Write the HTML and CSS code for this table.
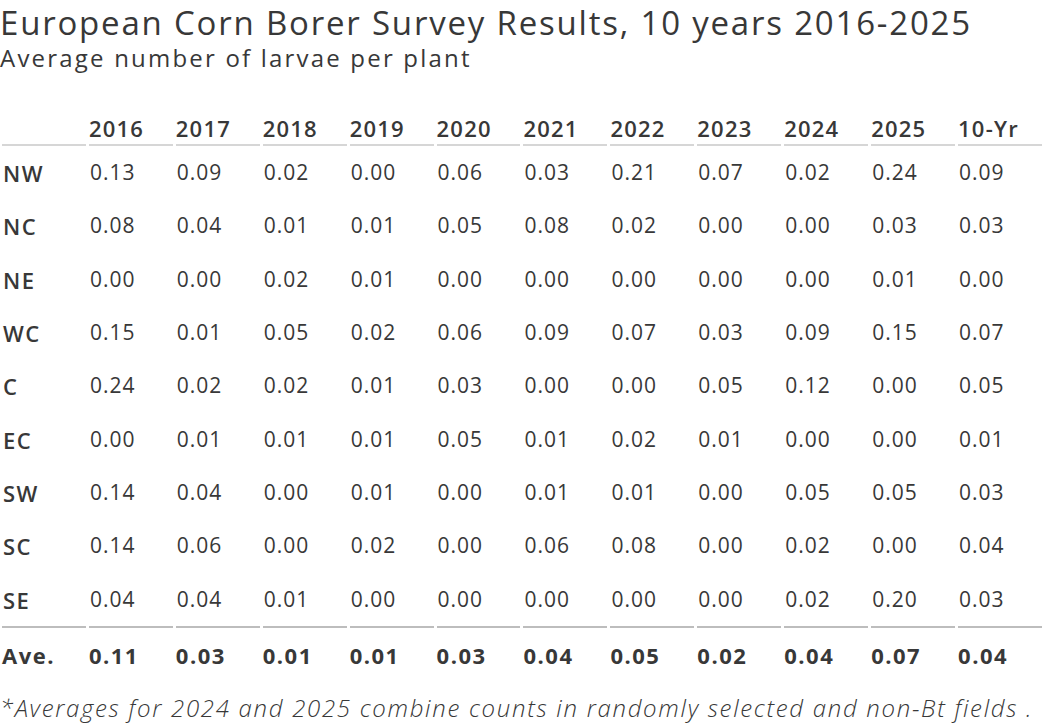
FILE: index.html
```html
<!DOCTYPE html>
<html lang="en">
<head>
<meta charset="utf-8">
<title>European Corn Borer Survey Results</title>
<link rel="stylesheet" href="styles.css">
</head>
<body>
<h1 class="title">European Corn Borer Survey Results, 10 years 2016-2025</h1>
<p class="subtitle">Average number of larvae per plant</p>
<div class="table">
  <div class="th"></div><div class="th">2016</div><div class="th">2017</div><div class="th">2018</div><div class="th">2019</div><div class="th">2020</div><div class="th">2021</div><div class="th">2022</div><div class="th">2023</div><div class="th">2024</div><div class="th">2025</div><div class="th">10-Yr</div>

  <div class="rl">NW</div><div class="td">0.13</div><div class="td">0.09</div><div class="td">0.02</div><div class="td">0.00</div><div class="td">0.06</div><div class="td">0.03</div><div class="td">0.21</div><div class="td">0.07</div><div class="td">0.02</div><div class="td">0.24</div><div class="td">0.09</div>

  <div class="rl">NC</div><div class="td">0.08</div><div class="td">0.04</div><div class="td">0.01</div><div class="td">0.01</div><div class="td">0.05</div><div class="td">0.08</div><div class="td">0.02</div><div class="td">0.00</div><div class="td">0.00</div><div class="td">0.03</div><div class="td">0.03</div>

  <div class="rl">NE</div><div class="td">0.00</div><div class="td">0.00</div><div class="td">0.02</div><div class="td">0.01</div><div class="td">0.00</div><div class="td">0.00</div><div class="td">0.00</div><div class="td">0.00</div><div class="td">0.00</div><div class="td">0.01</div><div class="td">0.00</div>

  <div class="rl">WC</div><div class="td">0.15</div><div class="td">0.01</div><div class="td">0.05</div><div class="td">0.02</div><div class="td">0.06</div><div class="td">0.09</div><div class="td">0.07</div><div class="td">0.03</div><div class="td">0.09</div><div class="td">0.15</div><div class="td">0.07</div>

  <div class="rl">C</div><div class="td">0.24</div><div class="td">0.02</div><div class="td">0.02</div><div class="td">0.01</div><div class="td">0.03</div><div class="td">0.00</div><div class="td">0.00</div><div class="td">0.05</div><div class="td">0.12</div><div class="td">0.00</div><div class="td">0.05</div>

  <div class="rl">EC</div><div class="td">0.00</div><div class="td">0.01</div><div class="td">0.01</div><div class="td">0.01</div><div class="td">0.05</div><div class="td">0.01</div><div class="td">0.02</div><div class="td">0.01</div><div class="td">0.00</div><div class="td">0.00</div><div class="td">0.01</div>

  <div class="rl">SW</div><div class="td">0.14</div><div class="td">0.04</div><div class="td">0.00</div><div class="td">0.01</div><div class="td">0.00</div><div class="td">0.01</div><div class="td">0.01</div><div class="td">0.00</div><div class="td">0.05</div><div class="td">0.05</div><div class="td">0.03</div>

  <div class="rl">SC</div><div class="td">0.14</div><div class="td">0.06</div><div class="td">0.00</div><div class="td">0.02</div><div class="td">0.00</div><div class="td">0.06</div><div class="td">0.08</div><div class="td">0.00</div><div class="td">0.02</div><div class="td">0.00</div><div class="td">0.04</div>

  <div class="rl">SE</div><div class="td">0.04</div><div class="td">0.04</div><div class="td">0.01</div><div class="td">0.00</div><div class="td">0.00</div><div class="td">0.00</div><div class="td">0.00</div><div class="td">0.00</div><div class="td">0.02</div><div class="td">0.20</div><div class="td">0.03</div>

  <div class="ave">Ave.</div><div class="ave">0.11</div><div class="ave">0.03</div><div class="ave">0.01</div><div class="ave">0.01</div><div class="ave">0.03</div><div class="ave">0.04</div><div class="ave">0.05</div><div class="ave">0.02</div><div class="ave">0.04</div><div class="ave">0.07</div><div class="ave">0.04</div>
</div>
<p class="note">*Averages for 2024 and 2025 combine counts in randomly selected and non-Bt fields .</p>
</body>
</html>
```

FILE: styles.css
```css
html, body {
  margin: 0;
  padding: 0;
  background: #ffffff;
}

body {
  font-family: "Open Sans", "Liberation Sans", sans-serif;
  color: #383838;
  width: 1046px;
}

.title {
  margin: 3px 0 0 0;
  font-size: 33px;
  line-height: 40px;
  font-weight: 500;
  letter-spacing: 1.8px;
  white-space: nowrap;
}

.subtitle {
  margin: 0;
  font-size: 24px;
  line-height: 30px;
  font-weight: 400;
  letter-spacing: 2.2px;
  white-space: nowrap;
}

.table {
  display: grid;
  grid-template-columns: repeat(12, 1fr);
  column-gap: 3px;
  width: 1040px;
  margin: 40px 0 0 2px;
}

.th {
  font-size: 22px;
  line-height: 30px;
  font-weight: 600;
  letter-spacing: 1.2px;
  padding: 0 0 1px 0;
  border-bottom: 2px solid #d6d6d6;
}

.td {
  font-size: 21px;
  line-height: 53.33px;
  font-weight: 400;
  letter-spacing: 1px;
  padding-left: 1px;
}

.rl {
  font-size: 22px;
  line-height: 51.33px;
  padding-top: 2px;
  padding-left: 1px;
  font-weight: 600;
  letter-spacing: 1.5px;
}

.ave {
  font-size: 22px;
  line-height: 54px;
  font-weight: 700;
  letter-spacing: 1.5px;
  border-top: 2px solid #bdbdbd;
}

.note {
  margin: 11px 0 0 0;
  font-size: 24px;
  line-height: 30px;
  font-style: italic;
  font-weight: 300;
  letter-spacing: 1.7px;
  white-space: nowrap;
}
```
